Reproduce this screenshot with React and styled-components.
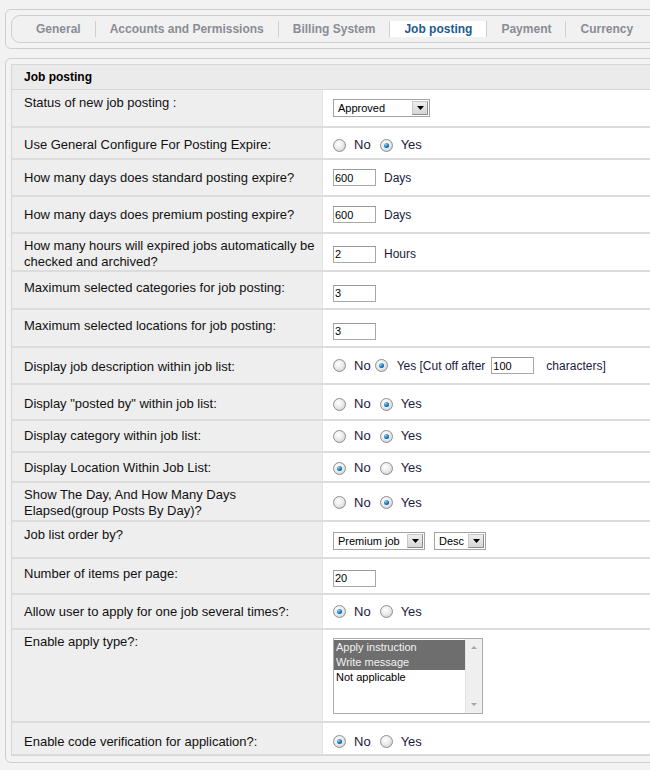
import React from "react";
import styled, { createGlobalStyle, css } from "styled-components";

const GlobalStyle = createGlobalStyle`
    html, body {
        margin: 0;
        padding: 0;
        background: #f2f2f2;
        overflow: hidden;
    }
    body {
        font-family: "Liberation Sans", Arial, sans-serif;
    }
`;

const tabs = [
    "General",
    "Accounts and Permissions",
    "Billing System",
    "Job posting",
    "Payment",
    "Currency",
];

export default function App() {
    return (
        <Page>
            <GlobalStyle />
            <TabPanel>
                <TabBar>
                    {tabs.map((t) => (
                        <Tab key={t} $active={t === "Job posting"}>
                            {t}
                        </Tab>
                    ))}
                </TabBar>
            </TabPanel>

            <SettingsPanel>
                <Table>
                    <HeadRow>Job posting</HeadRow>

                    <Row $h={36}>
                        <Label $top={5}>Status of new job posting :</Label>
                        <Value>
                            <Select width={97} value="Approved" />
                        </Value>
                    </Row>
                    <Row $h={30}>
                        <Label $dy={2}>Use General Configure For Posting Expire:</Label>
                        <Value $dy={2}>
                            <YesNo yes />
                        </Value>
                    </Row>
                    <Row $h={35}>
                        <Label>How many days does standard posting expire?</Label>
                        <Value>
                            <TextBox value="600" readOnly />
                            <Unit>Days</Unit>
                        </Value>
                    </Row>
                    <Row $h={35}>
                        <Label>How many days does premium posting expire?</Label>
                        <Value>
                            <TextBox value="600" readOnly />
                            <Unit>Days</Unit>
                        </Value>
                    </Row>
                    <Row $h={36}>
                        <Label $dy={2}>
                            How many hours will expired jobs automatically be
                            checked and archived?
                        </Label>
                        <Value $dy={2}>
                            <TextBox value="2" readOnly />
                            <Unit>Hours</Unit>
                        </Value>
                    </Row>
                    <Row $h={36}>
                        <Label $dy={-2}>Maximum selected categories for job posting:</Label>
                        <Value $dy={3}>
                            <TextBox value="3" readOnly />
                        </Value>
                    </Row>
                    <Row $h={36}>
                        <Label $dy={-2}>Maximum selected locations for job posting:</Label>
                        <Value $dy={3}>
                            <TextBox value="3" readOnly />
                        </Value>
                    </Row>
                    <Row $h={35}>
                        <Label $dy={1}>Display job description within job list:</Label>
                        <Value>
                            <Radio />
                            <RadioText>No</RadioText>
                            <Radio $checked $tight />
                            <CutText>Yes [Cut off after</CutText>
                            <TextBox value="100" readOnly />
                            <Unit $wide>characters]</Unit>
                        </Value>
                    </Row>
                    <Row $h={34}>
                        <Label $dy={2}>Display "posted by" within job list:</Label>
                        <Value $dy={2}>
                            <YesNo yes />
                        </Value>
                    </Row>
                    <Row $h={30}>
                        <Label>Display category within job list:</Label>
                        <Value>
                            <YesNo yes />
                        </Value>
                    </Row>
                    <Row $h={28}>
                        <Label $dy={1}>Display Location Within Job List:</Label>
                        <Value $dy={1}>
                            <YesNo />
                        </Value>
                    </Row>
                    <Row $h={37}>
                        <Label $dy={1}>
                            Show The Day, And How Many Days Elapsed(group Posts By
                            Day)?
                        </Label>
                        <Value $dy={1}>
                            <YesNo yes />
                        </Value>
                    </Row>
                    <Row $h={35}>
                        <Label $top={5}>Job list order by?</Label>
                        <Value $dy={1}>
                            <Select width={92} value="Premium job" />
                            <Gap />
                            <Select width={52} value="Desc" />
                        </Value>
                    </Row>
                    <Row $h={34}>
                        <Label $dy={-2}>Number of items per page:</Label>
                        <Value $dy={2}>
                            <TextBox value="20" readOnly />
                        </Value>
                    </Row>
                    <Row $h={33}>
                        <Label>Allow user to apply for one job several times?:</Label>
                        <Value>
                            <YesNo />
                        </Value>
                    </Row>
                    <Row $h={91}>
                        <Label $top={4}>Enable apply type?:</Label>
                        <Value>
                            <ListBox>
                                <Options>
                                    <Option $selected>Apply instruction</Option>
                                    <Option $selected>Write message</Option>
                                    <Option>Not applicable</Option>
                                </Options>
                                <ScrollBar>
                                    <Arrow />
                                    <Arrow $down />
                                </ScrollBar>
                            </ListBox>
                        </Value>
                    </Row>
                    <Row $h={31}>
                        <Label $dy={3}>Enable code verification for application?:</Label>
                        <Value $dy={3}>
                            <YesNo />
                        </Value>
                    </Row>
                </Table>
            </SettingsPanel>
        </Page>
    );
}

function YesNo({ yes }) {
    return (
        <>
            <Radio $checked={!yes} />
            <RadioText>No</RadioText>
            <Radio $checked={yes} />
            <RadioText>Yes</RadioText>
        </>
    );
}

function Select({ width, value }) {
    return (
        <SelectBox style={{ width }}>
            <SelectText>{value}</SelectText>
            <SelectButton>
                <svg width="7" height="4" viewBox="0 0 7 4">
                    <path d="M0 0h7L3.5 4z" fill="#000" />
                </svg>
            </SelectButton>
        </SelectBox>
    );
}

// positive $dy pushes the cell content down, negative pulls it up
const shift = (dy = 0) =>
    dy >= 0 ? `padding-top: ${dy * 2}px;` : `padding-bottom: ${-dy * 2}px;`;

const Page = styled.div`
    width: 720px;
    padding: 9px 0 0 5px;
`;
const TabPanel = styled.div`
    border: 1px solid #cdcdcd;
    border-radius: 6px;
    padding: 5px 0 5px 5px;
    background: #f3f3f3;
`;
const TabBar = styled.ul`
    display: flex;
    align-items: center;
    height: 26px;
    margin: 0;
    padding: 0 0 0 10px;
    list-style: none;
    border: 1px solid #cdcdcd;
    border-radius: 9px;
    background: #f1f1f1;
`;
const Tab = styled.li`
    padding: 0 14px;
    height: 16px;
    line-height: 16px;
    font-size: 12px;
    font-weight: bold;
    white-space: nowrap;
    color: #8a8d94;
    & + & {
        border-left: 1px solid #cfcfcf;
    }
    ${(p) =>
        p.$active &&
        css`
            background: #fff;
            color: #1d5b90;
        `}
`;
const SettingsPanel = styled.div`
    margin-top: 9px;
    border: 1px solid #cdcdcd;
    border-radius: 6px;
    padding: 5px 0 6px 5px;
    background: #f3f3f3;
`;
const Table = styled.div`
    border: 1px solid #d6d6d6;
    background: #fff;
`;
const HeadRow = styled.div`
    height: 24px;
    line-height: 24px;
    padding-left: 12px;
    font-size: 12px;
    font-weight: bold;
    color: #000;
    background: #ebebeb;
    border-bottom: 1px solid #d6d6d6;
`;
const Row = styled.div`
    display: grid;
    grid-template-columns: 311px 1fr;
    height: ${(p) => p.$h}px;
    border-bottom: 2px solid #dcdcdc;
    &:last-child {
        border-bottom: 1px solid #dcdcdc;
    }
`;
const Label = styled.div`
    box-sizing: border-box;
    display: flex;
    align-items: ${(p) => (p.$top ? "flex-start" : "center")};
    padding: 0 2px 0 12px;
    ${(p) => (p.$top ? `padding-top: ${p.$top}px;` : shift(p.$dy))}
    font-size: 13px;
    line-height: 16px;
    color: #111;
    background: #eeeeee;
    border-right: 1px solid #e4e4e4;
`;
const Value = styled.div`
    box-sizing: border-box;
    display: flex;
    align-items: center;
    padding-left: 10px;
    ${(p) => shift(p.$dy)}
    font-size: 13px;
    color: #1a1a3c;
`;
const Radio = styled.span`
    display: inline-flex;
    align-items: center;
    justify-content: center;
    box-sizing: border-box;
    width: 13px;
    height: 13px;
    margin-left: ${(p) => (p.$tight ? "4px" : "9px")};
    border: 1px solid #8e8f8f;
    border-radius: 50%;
    background: radial-gradient(circle at 40% 35%, #ffffff 0%, #e9e9e9 50%, #c4c4c4 100%);
    &:first-child {
        margin-left: 0;
    }
    ${(p) =>
        p.$checked &&
        css`
            &::after {
                content: "";
                width: 5px;
                height: 5px;
                border-radius: 50%;
                background: radial-gradient(circle at 35% 30%, #8fd0f5 0%, #1375bd 55%, #05406f 100%);
            }
        `}
`;
const RadioText = styled.span`
    margin-left: 8px;
    line-height: 16px;
    white-space: nowrap;
`;
const CutText = styled.span`
    margin-left: 9px;
    font-size: 12px;
    line-height: 16px;
    white-space: nowrap;
`;
const TextBox = styled.input`
    box-sizing: border-box;
    width: 43px;
    height: 17px;
    margin: 0;
    padding: 0 1px;
    border: 1px solid #a8a8a8;
    border-top-color: #9a9a9a;
    font-family: "Liberation Sans", Arial, sans-serif;
    font-size: 11px;
    color: #000;
    background: #fff;
    outline: none;
    ${CutText} + & {
        margin-left: 6px;
    }
`;
const Unit = styled.span`
    margin-left: ${(p) => (p.$wide ? "12px" : "8px")};
    font-size: 12px;
    line-height: 16px;
    white-space: nowrap;
`;
const Gap = styled.span`
    width: 9px;
`;
const SelectBox = styled.div`
    box-sizing: border-box;
    display: flex;
    align-items: center;
    justify-content: space-between;
    height: 18px;
    padding: 0 1px 0 4px;
    border: 1px solid #a3a3a3;
    background: #fff;
`;
const SelectText = styled.span`
    font-size: 11px;
    color: #000;
    white-space: nowrap;
`;
const SelectButton = styled.span`
    box-sizing: border-box;
    display: flex;
    align-items: center;
    justify-content: center;
    width: 16px;
    height: 14px;
    border: 1px solid #8c8c8c;
    border-top-color: #c8c8c8;
    border-left-color: #c8c8c8;
    background: linear-gradient(#eeeeee, #d6d6d6);
`;
const ListBox = styled.div`
    box-sizing: border-box;
    display: flex;
    align-self: flex-start;
    margin-top: 8px;
    width: 150px;
    height: 76px;
    border: 1px solid #ababab;
    background: #fff;
`;
const Options = styled.div`
    flex: 1;
    padding-top: 1px;
`;
const Option = styled.div`
    height: 15px;
    line-height: 15px;
    padding-left: 2px;
    font-size: 11px;
    color: #000;
    ${(p) =>
        p.$selected &&
        css`
            background: #6e6e6e;
            color: #f2f2f2;
        `}
`;
const ScrollBar = styled.div`
    width: 16px;
    display: flex;
    flex-direction: column;
    justify-content: space-between;
    align-items: center;
    padding: 7px 0;
    background: #efefef;
    border-left: 1px solid #e2e2e2;
`;
const Arrow = styled.span`
    width: 0;
    height: 0;
    border-left: 3px solid transparent;
    border-right: 3px solid transparent;
    ${(p) =>
        p.$down
            ? css`
                  border-top: 3px solid #a6a6a6;
              `
            : css`
                  border-bottom: 3px solid #a6a6a6;
              `}
`;
